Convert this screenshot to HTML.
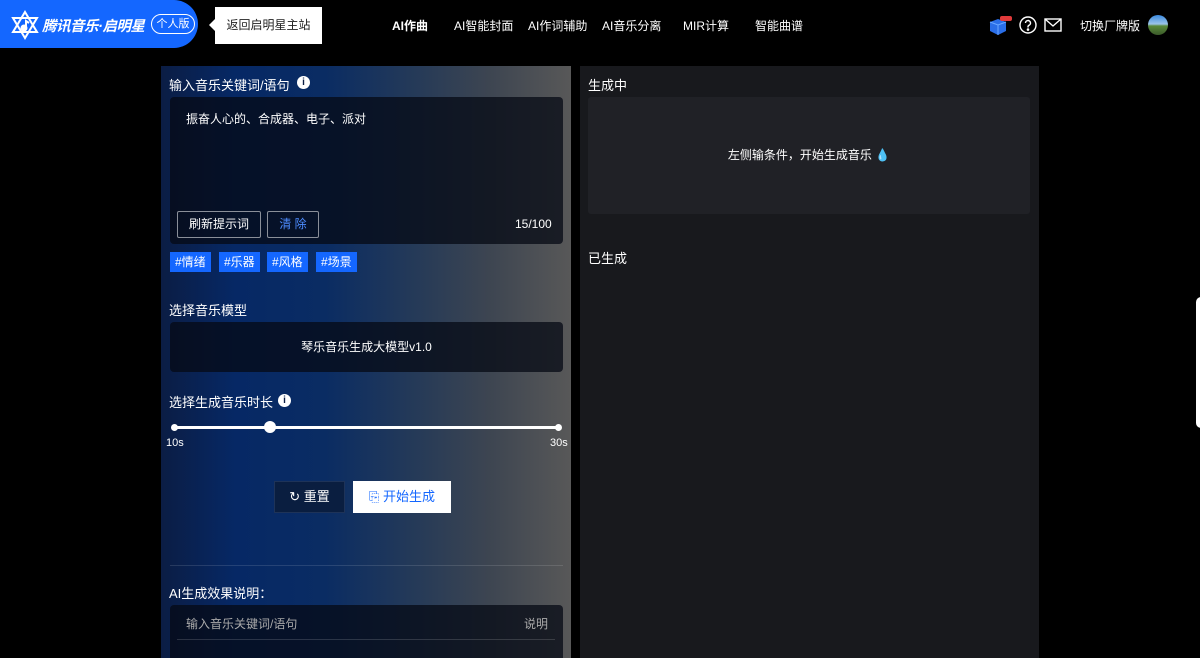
<!DOCTYPE html>
<html><head><meta charset="utf-8"><style>
*{margin:0;padding:0;box-sizing:border-box}
html,body{width:1200px;height:658px;overflow:hidden}
body{background:#000;position:relative;font-family:"Liberation Sans","Noto Sans CJK SC",sans-serif;color:#fff;font-size:12px}
.abs{position:absolute}
.logo{left:0;top:0;width:198px;height:48px;background:#1467ff;border-radius:0 24px 24px 0}
.nav{top:17px;font-size:12px;color:#fff}
.left{left:161px;top:66px;width:410px;height:592px;background:linear-gradient(90deg,#0b1d44 0%,#062865 18%,#0a2c63 40%,#253a58 62%,#3d4551 80%,#585858 100%)}
.box{background:rgba(5,10,20,0.75);border-radius:4px}
.right{left:580px;top:66px;width:459px;height:592px;background:#18191d}
.tag{position:absolute;top:252px;height:20px;background:#1467ff;color:#fff;font-size:12px;line-height:20px;padding:0 5px}
.btn{position:absolute;border:1px solid #8a8f99;border-radius:2px;font-size:12px;line-height:25px;text-align:center}
.lbl{font-size:13px}
.info{width:13px;height:13px;border-radius:50%;background:#fff;color:#0b1d44;font-size:10px;font-weight:bold;text-align:center;line-height:13px}
</style></head><body>
<div class="abs logo"></div>
<svg class="abs" style="left:10px;top:10px" width="30" height="30" viewBox="0 0 30 30" fill="none" stroke="#fff" stroke-width="2"><path d="M15 2L27 22H3Z"/><path d="M15 28L3 8H27Z"/><circle cx="14" cy="18" r="2.5" fill="#fff"/><path d="M16 18V11l3 2"/></svg>
<div class="abs" style="left:42px;top:15px;font-size:14.5px;font-weight:bold;font-style:italic;letter-spacing:-0.5px">腾讯音乐·启明星</div>
<div class="abs" style="left:151px;top:14px;width:44px;height:20px;border:1px solid #fff;border-radius:10px;font-size:11px;line-height:18px;text-align:center">个人版</div>
<div class="abs" style="left:203px;top:19px;width:0;height:0;border:6px solid transparent;border-right-color:#fff"></div>
<div class="abs" style="left:215px;top:7px;width:107px;height:37px;background:#fff;color:#222;font-size:12px;line-height:37px;text-align:center">返回启明星主站</div>
<div class="abs nav" style="left:392px;font-weight:bold">AI作曲</div>
<div class="abs nav" style="left:454px">AI智能封面</div>
<div class="abs nav" style="left:528px">AI作词辅助</div>
<div class="abs nav" style="left:602px">AI音乐分离</div>
<div class="abs nav" style="left:683px">MIR计算</div>
<div class="abs nav" style="left:755px">智能曲谱</div>
<svg class="abs" style="left:989px;top:15px" width="28" height="20" viewBox="0 0 28 20"><path d="M1 7l8-3 8 3v9l-8 4-8-4z" fill="#2a6ee8"/><path d="M9 10v10M1 7l8 3 8-3" stroke="#6aa8ff" fill="none"/><rect x="11" y="1" width="12" height="5" rx="2" fill="#e03a3a"/></svg>
<svg class="abs" style="left:1019px;top:16px" width="18" height="18" viewBox="0 0 18 18" fill="none" stroke="#fff" stroke-width="1.4"><circle cx="9" cy="9" r="8"/><path d="M6.5 7a2.5 2.5 0 1 1 3.5 2.3c-.7.3-1 .8-1 1.5v.7"/><circle cx="9" cy="13.6" r=".6" fill="#fff"/></svg>
<svg class="abs" style="left:1044px;top:18px" width="18" height="14" viewBox="0 0 18 14" fill="none" stroke="#fff" stroke-width="1.4"><rect x="1" y="1" width="16" height="12"/><path d="M1 1l8 7 8-7"/></svg>
<div class="abs nav" style="left:1080px">切换厂牌版</div>
<div class="abs" style="left:1148px;top:15px;width:20px;height:20px;border-radius:50%;background:linear-gradient(#3a8ae0 0%,#9cc4e8 45%,#5a8a3a 55%,#3a5a2a 100%)"></div>

<div class="abs left"></div>
<div class="abs lbl" style="left:169px;top:75px">输入音乐关键词/语句</div>
<div class="abs info" style="left:297px;top:76px">i</div>
<div class="abs box" style="left:170px;top:97px;width:393px;height:147px"></div>
<div class="abs" style="left:186px;top:110px">振奋人心的、合成器、电子、派对</div>
<div class="btn" style="left:177px;top:211px;width:84px;height:27px">刷新提示词</div>
<div class="btn" style="left:267px;top:211px;width:52px;height:27px;color:#4d8cff">清 除</div>
<div class="abs" style="left:515px;top:217px">15/100</div>
<div class="tag" style="left:170px">#情绪</div>
<div class="tag" style="left:219px">#乐器</div>
<div class="tag" style="left:267px">#风格</div>
<div class="tag" style="left:316px">#场景</div>
<div class="abs lbl" style="left:169px;top:300px">选择音乐模型</div>
<div class="abs box" style="left:170px;top:322px;width:393px;height:50px;text-align:center;line-height:50px">琴乐音乐生成大模型v1.0</div>
<div class="abs lbl" style="left:169px;top:392px">选择生成音乐时长</div>
<div class="abs info" style="left:278px;top:394px">i</div>
<div class="abs" style="left:174px;top:426px;width:384px;height:3px;background:#fff"></div>
<div class="abs" style="left:171px;top:424px;width:7px;height:7px;border-radius:50%;background:#fff"></div>
<div class="abs" style="left:555px;top:424px;width:7px;height:7px;border-radius:50%;background:#fff"></div>
<div class="abs" style="left:264px;top:421px;width:12px;height:12px;border-radius:50%;background:#fff"></div>
<div class="abs" style="left:166px;top:437px;font-size:11px">10s</div>
<div class="abs" style="left:550px;top:437px;font-size:11px">30s</div>
<div class="abs" style="left:274px;top:481px;width:71px;height:32px;background:#0a1e40;border:1px solid #1e3358;line-height:30px;text-align:center;font-size:13px">↻ 重置</div>
<div class="abs" style="left:353px;top:481px;width:98px;height:32px;background:#fff;color:#1467ff;line-height:32px;text-align:center;font-size:13px">⎘ 开始生成</div>
<div class="abs" style="left:170px;top:565px;width:393px;height:1px;background:rgba(255,255,255,0.12)"></div>
<div class="abs lbl" style="left:169px;top:583px">AI生成效果说明：</div>
<div class="abs box" style="left:170px;top:605px;width:393px;height:53px;border-radius:4px 4px 0 0"></div>
<div class="abs" style="left:186px;top:615px;color:#aaa">输入音乐关键词/语句</div>
<div class="abs" style="left:524px;top:615px;color:#aaa">说明</div>
<div class="abs" style="left:177px;top:639px;width:378px;height:1px;background:rgba(255,255,255,0.15)"></div>

<div class="abs right"></div>
<div class="abs lbl" style="left:588px;top:75px">生成中</div>
<div class="abs" style="left:588px;top:97px;width:442px;height:117px;background:#202126;border-radius:3px;text-align:center;line-height:117px">左侧输条件，开始生成音乐 <span style="color:#3a8ae0">💧</span></div>
<div class="abs lbl" style="left:588px;top:248px">已生成</div>
<div class="abs" style="left:1196px;top:297px;width:10px;height:131px;background:#fff;border-radius:5px"></div>
</body></html>
